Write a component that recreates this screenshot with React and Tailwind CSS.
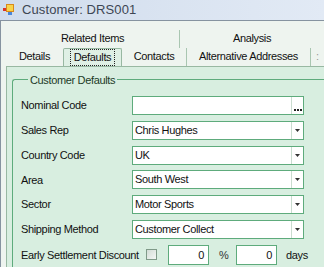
import { ChevronDown } from "lucide-react";

const rows = [
  { label: "Nominal Code", value: "", kind: "browse" },
  { label: "Sales Rep", value: "Chris Hughes", kind: "combo" },
  { label: "Country Code", value: "UK", kind: "combo" },
  { label: "Area", value: "South West", kind: "combo" },
  { label: "Sector", value: "Motor Sports", kind: "combo" },
  { label: "Shipping Method", value: "Customer Collect", kind: "combo" },
];

function FormIcon() {
  return (
    <svg width="12" height="12" viewBox="0 0 12 12">
      <rect x="0" y="4" width="3" height="3" fill="#d8352a" />
      <rect x="3.5" y="0.5" width="7" height="7" fill="#f8d44a" stroke="#d88a1c" />
      <rect x="5" y="8" width="4" height="3" fill="#4a86d8" />
    </svg>
  );
}

function Field({ value, kind }) {
  return (
    <div className="flex h-[19px] w-[172px] items-stretch border border-[#5eab7c] bg-white">
      <span className="flex-1 pl-[2px] leading-[17px]">{value}</span>
      {kind === "combo" ? (
        <span className="flex w-[12px] items-center justify-center border-l border-[#c9dccf] bg-white">
          <svg width="5" height="3" viewBox="0 0 5 3">
            <path d="M0 0 L5 0 L2.5 3 Z" fill="#333" />
          </svg>
        </span>
      ) : (
        <span className="flex w-[12px] items-end justify-center border-l border-[#c9dccf] pb-[3px]">
          <svg width="8" height="2" viewBox="0 0 8 2">
            <rect x="0" y="0" width="2" height="2" fill="#222" />
            <rect x="3" y="0" width="2" height="2" fill="#222" />
            <rect x="6" y="0" width="2" height="2" fill="#222" />
          </svg>
        </span>
      )}
    </div>
  );
}

export default function App() {
  return (
    <div
      className="flex h-[267px] w-[324px] flex-col overflow-hidden bg-white text-[11px] tracking-[-0.35px] text-[#111]"
      style={{ fontFamily: '"Liberation Sans", Arial, sans-serif' }}
    >
      {/* title bar */}
      <div className="flex h-[22px] items-center gap-[7px] bg-gradient-to-r from-[#d0dcec] to-[#e2eaf5] pl-[3px]">
        <FormIcon />
        <span className="text-[13px] tracking-[0.1px] text-[#3d4653]">Customer: DRS001</span>
      </div>

      <div className="flex flex-1 flex-col border-l border-t border-[#8693a0] bg-[#eef4ef] pl-[5px]">
        {/* tab headers */}
        <div className="pt-[9px]">
          <div className="flex h-[18px] items-center">
            <div className="w-[178px] text-center">Related Items</div>
            <div className="h-full border-l border-[#a9c6b1]" />
            <div className="w-[148px] text-center">Analysis</div>
          </div>
          <div className="flex h-[18px] items-stretch">
            <div className="flex w-[57px] items-center justify-center">Details</div>
            <div className="flex w-[59px] items-center justify-center rounded-t-[2px] border border-b-0 border-[#98b8a2] bg-[#dff0e5]">
              <span className="border border-dotted border-[#222] px-[3px] leading-[15px]">Defaults</span>
            </div>
            <div className="flex w-[64px] items-center justify-center">Contacts</div>
            <div className="border-l border-[#a9c6b1]" />
            <div className="flex w-[123px] items-center justify-center">Alternative Addresses</div>
            <div className="border-l border-[#a9c6b1]" />
            <div className="flex items-center pl-[5px] text-[#999]">:</div>
          </div>
        </div>

        {/* tab page */}
        <div className="flex-1 border-l border-t border-[#98b8a2] bg-[#d8eee0] pl-[5px] pt-[5px]">
          <fieldset className="rounded-tl-[3px] border border-r-0 border-b-0 border-[#5eab7c] pb-2 pl-[8px] pt-[8px]">
            <legend className="ml-[7px] px-[2px] text-[#1c3a27]">Customer Defaults</legend>
            <div className="flex flex-col gap-[5.8px]">
              {rows.map((r) => (
                <div key={r.label} className="flex items-center">
                  <span className="w-[111px]">{r.label}</span>
                  <Field value={r.value} kind={r.kind} />
                </div>
              ))}
              <div className="flex items-center">
                <span className="w-[125px] whitespace-nowrap">Early Settlement Discount</span>
                <span className="h-[11px] w-[11px] border border-[#7f9a88] bg-gradient-to-br from-[#d2dcd5] to-[#f4f7f5]" />
                <span className="ml-[11px] h-[20px] w-[41px] border border-[#5eab7c] bg-white pr-[4px] text-right leading-[18px]">0</span>
                <span className="ml-[10px] w-[17px] text-[#333]">%</span>
                <span className="h-[20px] w-[41px] border border-[#5eab7c] bg-white pr-[4px] text-right leading-[18px]">0</span>
                <span className="ml-[9px]">days</span>
              </div>
            </div>
          </fieldset>
        </div>
      </div>
    </div>
  );
}
